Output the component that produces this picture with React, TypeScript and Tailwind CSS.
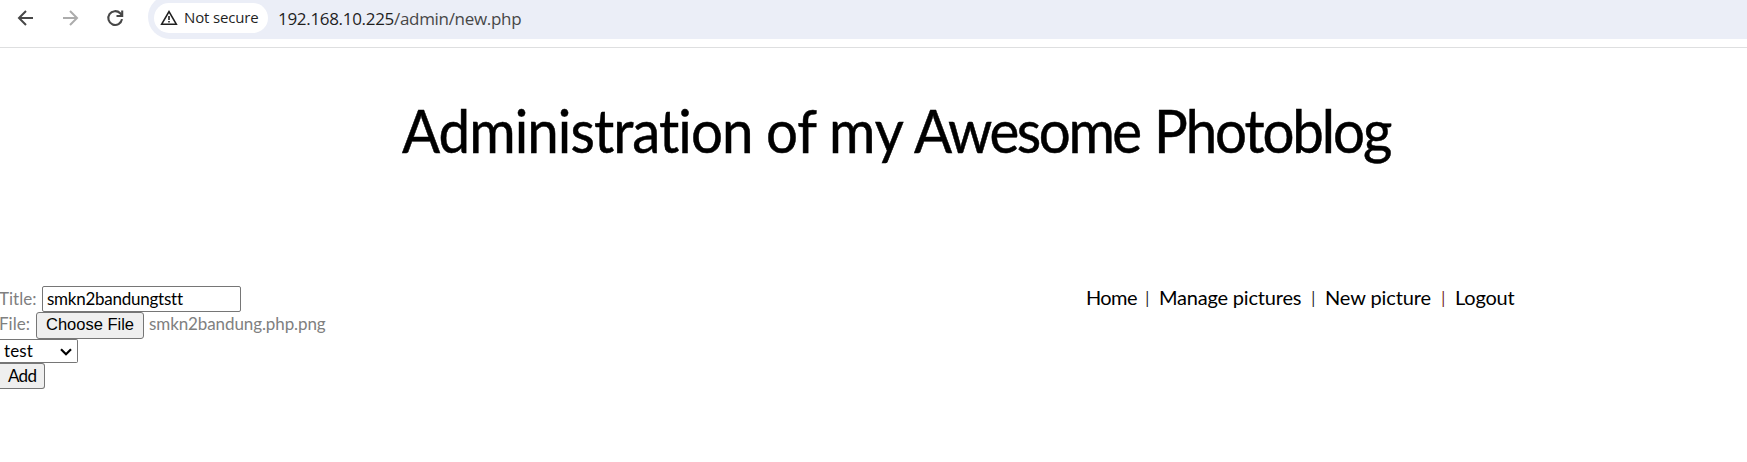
import React from "react";

function Toolbar() {
  return (
    <header className="flex h-[48px] items-start border-b border-[#dedfe0] bg-white">
      <div className="flex h-[36px] w-[148px] shrink-0 items-center pl-[14px] text-[#474747]">
        <svg width="24" height="24" viewBox="0 0 24 24" fill="none" stroke="currentColor" strokeWidth="2">
          <path d="M19 12H5M12 5l-7 7 7 7" />
        </svg>
        <svg className="ml-[20px] text-[#acacac]" width="24" height="24" viewBox="0 0 24 24" fill="none" stroke="currentColor" strokeWidth="2">
          <path d="M5 12h14M12 5l7 7-7 7" />
        </svg>
        <svg className="ml-[21px]" width="24" height="24" viewBox="0 0 24 24" fill="none" stroke="currentColor" strokeWidth="2.1">
          <path d="M19 13.2A6.9 6.9 0 1 1 17.2 7.3L19 9.3" />
          <path d="M19.2 4.5v5.5h-5.7" />
        </svg>
      </div>
      <div className="-mt-[5px] flex h-[44px] flex-1 items-center rounded-l-full bg-[#ebeef7] pl-[6px]">
        <div className="mt-[2px] flex h-[30px] w-[114px] items-center rounded-full bg-white pl-[6px] text-[#1f1f1f]">
          <svg width="18" height="18" viewBox="0 0 18 18" fill="none" stroke="currentColor" strokeWidth="1.6">
            <path d="M1.7 15.2 9 2.5l7.3 12.7z" />
            <path d="M9 7v4M9 12v1.6" />
          </svg>
          <span className="-mt-[2px] ml-[6px] whitespace-nowrap font-['Open_Sans',sans-serif] text-[15px] leading-[20px] tracking-[-0.15px]">Not secure</span>
        </div>
        <div className="ml-[10px] mt-[4px] whitespace-nowrap font-['Open_Sans',sans-serif] text-[17px] leading-[24px] tracking-[-0.31px]">
          <span className="text-[#1f1f1f]">192.168.10.225</span>
          <span className="text-[#474747]">/admin/new.php</span>
        </div>
      </div>
    </header>
  );
}

function Heading() {
  return (
    <h1 className="flex h-[238px] pl-[402px] pt-[46px] text-[60px] leading-[72px] text-black [-webkit-text-stroke:0.5px_#000]">
      <span className="w-[364px] origin-left scale-x-[0.94] tracking-[-1px]">Administration</span>
      <span className="w-[63px] origin-left scale-x-[0.94]">of</span>
      <span className="w-[85px] origin-left scale-x-[0.94]">my</span>
      <span className="w-[240px] origin-left scale-x-[0.94] tracking-[-2.6px]">Awesome</span>
      <span className="w-[260px] origin-left scale-x-[0.94] tracking-[-2.2px]">Photoblog</span>
    </h1>
  );
}

function Form() {
  return (
    <form className="w-[1086px] text-[17px] text-[#808080]">
      <div className="flex h-[26px]">
        <label className="-ml-[1px] w-[43px] leading-[26px]">Title:</label>
        <input
          className="h-[26px] w-[199px] rounded-[2px] border border-[#767676] bg-white px-[4px] pb-[2px] tracking-[-0.25px] text-black"
          defaultValue="smkn2bandungtstt"
        />
      </div>
      <div className="flex h-[27px]">
        <label className="-ml-[1px] w-[37px] leading-[24px]">File:</label>
        <button
          type="button"
          className="h-[27px] w-[108px] whitespace-nowrap rounded-[3px] border border-[#767676] bg-[#efefef] pb-[3px] font-['Liberation_Sans',sans-serif] text-[16.5px] leading-[22px] text-black"
        >
          Choose File
        </button>
        <span className="ml-[5px] leading-[24px] tracking-[-0.1px]">smkn2bandung.php.png</span>
      </div>
      <div className="flex h-[24px] w-[78px] items-center rounded-r-[2px] border border-l-0 border-[#767676] bg-white pl-[4px] text-black">
        <span className="w-[55px] leading-[22px] tracking-[0.1px]">test</span>
        <svg className="mt-[2px]" width="14" height="10" viewBox="0 0 14 10" fill="none" stroke="currentColor" strokeWidth="2.2">
          <path d="M2 2.2l5 5 5-5" />
        </svg>
      </div>
      <button
        type="button"
        className="block h-[26px] w-[45px] rounded-r-[3px] border border-l-0 border-[#767676] bg-[#efefef] pl-[8px] text-left leading-[24px] tracking-[-0.7px] text-black"
      >
        Add
      </button>
    </form>
  );
}

function Nav() {
  return (
    <nav className="-mt-[1px] flex whitespace-nowrap text-[20px] leading-[24px] text-black">
      <a className="w-[57px] tracking-[-0.6px]">Home</a>
      <span className="w-[16px] font-['Open_Sans',sans-serif] text-[15.5px] text-[#222]">|</span>
      <a className="w-[150px] tracking-[-0.2px]">Manage pictures</a>
      <span className="w-[16px] font-['Open_Sans',sans-serif] text-[15.5px] text-[#222]">|</span>
      <a className="w-[114px] tracking-[-0.1px]">New picture</a>
      <span className="w-[16px] font-['Open_Sans',sans-serif] text-[15.5px] text-[#6b1a10]">|</span>
      <a className="tracking-[-0.2px]">Logout</a>
    </nav>
  );
}

export default function App() {
  return (
    <div className="h-[462px] w-[1747px] overflow-hidden bg-white font-['Lato',sans-serif]">
      <Toolbar />
      <Heading />
      <main className="flex">
        <Form />
        <Nav />
      </main>
    </div>
  );
}
